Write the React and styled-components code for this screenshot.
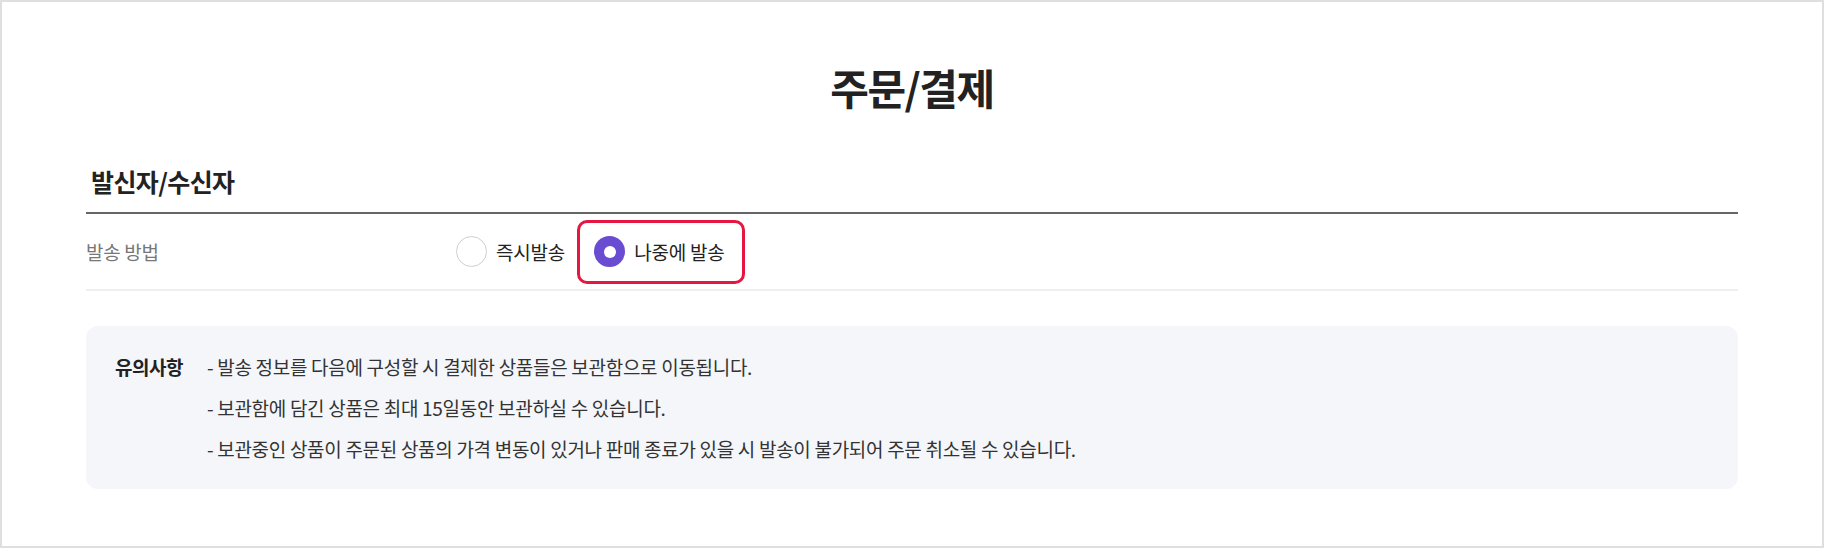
import React, { useState } from 'react';
import styled, { createGlobalStyle } from 'styled-components';

const GlobalStyle = createGlobalStyle`
  html, body {
    margin: 0;
    padding: 0;
    background: #fff;
  }
  body {
    font-family: 'Noto Sans CJK KR', 'Noto Sans', sans-serif;
    color: #222;
    overflow: hidden;
  }
  * {
    box-sizing: border-box;
  }
`;

const NOTICES = [
  '- 발송 정보를 다음에 구성할 시 결제한 상품들은 보관함으로 이동됩니다.',
  '- 보관함에 담긴 상품은 최대 15일동안 보관하실 수 있습니다.',
  '- 보관중인 상품이 주문된 상품의 가격 변동이 있거나 판매 종료가 있을 시 발송이 불가되어 주문 취소될 수 있습니다.',
];

const App = () => {
  const [method, setMethod] = useState('later');

  return (
    <Frame>
      <GlobalStyle />
      <PageTitle>주문/결제</PageTitle>

      <SectionHeader>
        <SectionTitle>발신자/수신자</SectionTitle>
      </SectionHeader>

      <FieldRow>
        <FieldLabel>발송 방법</FieldLabel>
        <Options>
          <Option onClick={() => setMethod('now')}>
            <RadioMark checked={method === 'now'} />
            <OptionText>즉시발송</OptionText>
          </Option>
          <Highlight>
            <Option onClick={() => setMethod('later')}>
              <RadioMark checked={method === 'later'} />
              <OptionText>나중에 발송</OptionText>
            </Option>
          </Highlight>
        </Options>
      </FieldRow>

      <NoticeBox>
        <NoticeLabel>유의사항</NoticeLabel>
        <NoticeList>
          {NOTICES.map((text, i) => (
            <NoticeItem key={i} last={i === NOTICES.length - 1}>
              {text}
            </NoticeItem>
          ))}
        </NoticeList>
      </NoticeBox>
    </Frame>
  );
};

export default App;

const Frame = styled.div`
  width: 100%;
  height: 548px;
  border: 2px solid #dfdfdf;
  padding: 56px 84px 0;
  background: #fff;
`;

const PageTitle = styled.h1`
  margin: 0;
  text-align: center;
  font-size: 42px;
  line-height: 58px;
  font-weight: 700;
  letter-spacing: -1.5px;
  color: #222;
`;

const SectionHeader = styled.div`
  margin-top: 48px;
  padding: 0 0 14px 5px;
  border-bottom: 2px solid #666;
`;

const SectionTitle = styled.h2`
  margin: 0;
  font-size: 25px;
  line-height: 34px;
  font-weight: 700;
  letter-spacing: -0.6px;
  color: #222;
`;

const FieldRow = styled.div`
  display: flex;
  align-items: center;
  height: 77px;
  border-bottom: 2px solid #efefef;
`;

const FieldLabel = styled.div`
  width: 370px;
  font-size: 19px;
  letter-spacing: -0.3px;
  color: #777;
`;

const Options = styled.div`
  display: flex;
  align-items: center;
  gap: 12px;
`;

const Highlight = styled.div`
  display: flex;
  align-items: center;
  height: 64px;
  padding: 0 17px 0 14px;
  border: 3px solid #e5163f;
  border-radius: 10px;
`;

const Option = styled.label`
  display: flex;
  align-items: center;
  gap: 9px;
  cursor: pointer;
`;

const RadioMark = styled.span`
  position: relative;
  width: 31px;
  height: 31px;
  border-radius: 50%;
  border: ${props => (props.checked ? 'none' : '1.5px solid #cfcfcf')};
  background: ${props => (props.checked ? '#6a4cd2' : '#fff')};
  &::after {
    content: '';
    display: ${props => (props.checked ? 'block' : 'none')};
    position: absolute;
    top: 50%;
    left: 50%;
    width: 12px;
    height: 12px;
    margin: -6px 0 0 -6px;
    border-radius: 50%;
    background: #fff;
  }
`;

const OptionText = styled.span`
  font-size: 19px;
  letter-spacing: -0.2px;
  color: #222;
`;

const NoticeBox = styled.div`
  display: flex;
  margin-top: 35px;
  height: 163px;
  padding: 26px 29px 0;
  background: #f5f6fa;
  border-radius: 12px;
`;

const NoticeLabel = styled.div`
  width: 92px;
  flex-shrink: 0;
  font-size: 19px;
  line-height: 30px;
  font-weight: 700;
  letter-spacing: -0.5px;
  color: #222;
`;

const NoticeList = styled.ul`
  margin: 0;
  padding: 0;
  list-style: none;
`;

const NoticeItem = styled.li`
  font-size: 19px;
  line-height: 30px;
  letter-spacing: -0.3px;
  color: #333;
  & + & {
    margin-top: ${props => (props.last ? '11px' : '6px')};
  }
`;
